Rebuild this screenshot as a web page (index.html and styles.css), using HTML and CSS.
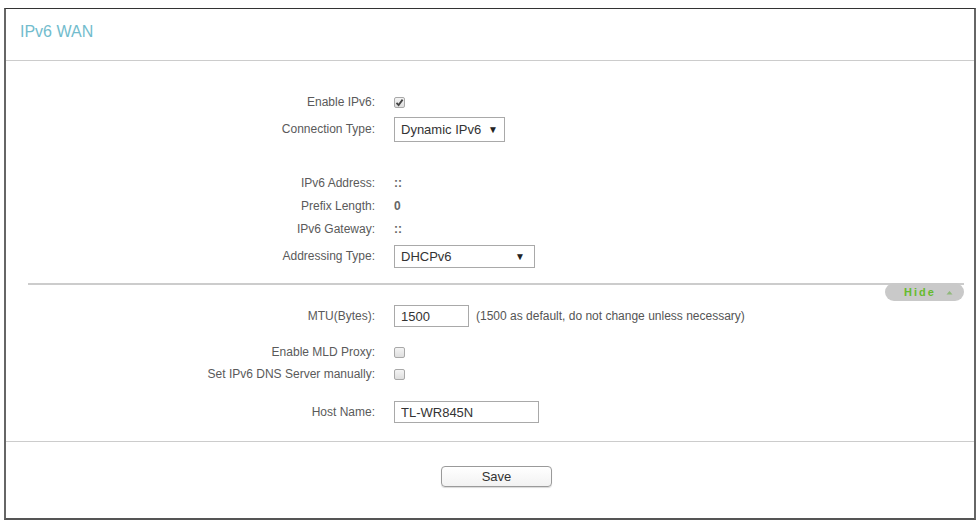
FILE: index.html
```html
<!DOCTYPE html>
<html lang="en">
<head>
  <meta charset="UTF-8">
  <meta name="viewport" content="width=device-width, initial-scale=1.0">
  <title>IPv6 WAN</title>
  <link rel="stylesheet" href="styles.css">
</head>
<body>

  <div class="panel">
    <div class="panel-head">IPv6 WAN</div>

    <form class="panel-body" id="wanForm">
      <div class="row row-enable">
        <label class="row-label">Enable IPv6:</label>
        <span class="row-value"><span class="check checked"><svg width="9" height="9" viewBox="0 0 9 9"><path d="M1.5 4.8 L3.6 7 L7.6 1.6" fill="none" stroke="#444" stroke-width="1.8"/></svg></span></span>
      </div>
      <div class="row row-conn">
        <label class="row-label">Connection Type:</label>
        <span class="row-value"><span class="select select-conn"><span>Dynamic IPv6</span><span class="arrow">&#9660;</span></span></span>
      </div>

      <div class="row row-addr">
        <label class="row-label">IPv6 Address:</label>
        <span class="row-value value-text">::</span>
      </div>
      <div class="row row-tight">
        <label class="row-label">Prefix Length:</label>
        <span class="row-value value-text">0</span>
      </div>
      <div class="row row-tight">
        <label class="row-label">IPv6 Gateway:</label>
        <span class="row-value value-text">::</span>
      </div>
      <div class="row row-type">
        <label class="row-label">Addressing Type:</label>
        <span class="row-value"><span class="select select-type"><span>DHCPv6</span><span class="arrow">&#9660;</span></span></span>
      </div>

      <div class="divider">
        <span class="toggle">Hide <svg width="7" height="5" viewBox="0 0 7 5"><path d="M0.5 4.5 L3.5 1 L6.5 4.5 Z" fill="#8fb87a"/></svg></span>
      </div>

      <div class="row row-mtu">
        <label class="row-label">MTU(Bytes):</label>
        <span class="row-value">
          <input type="text" class="field field-mtu" value="1500">
          <span class="hint">(1500 as default, do not change unless necessary)</span>
        </span>
      </div>

      <div class="row row-mld">
        <label class="row-label">Enable MLD Proxy:</label>
        <span class="row-value"><span class="check"></span></span>
      </div>
      <div class="row">
        <label class="row-label">Set IPv6 DNS Server manually:</label>
        <span class="row-value"><span class="check"></span></span>
      </div>

      <div class="row row-host">
        <label class="row-label">Host Name:</label>
        <span class="row-value"><input type="text" class="field field-host" value="TL-WR845N"></span>
      </div>
    </form>

    <div class="panel-foot">
      <button type="submit" form="wanForm" class="save-btn">Save</button>
    </div>
  </div>

</body>
</html>
```

FILE: styles.css
```css
body {
  font-family: "Liberation Sans", Arial, sans-serif;
  background-color: #fff;
  margin: 8px 3px 0 4px;
  color: #555;
}
.panel {
  border-top: 1px solid #333;
  border-left: 2px solid #666;
  border-right: 2px solid #666;
  border-bottom: 2px solid #555;
}
.panel-head {
  height: 52px;
  box-sizing: border-box;
  padding: 13px 0 0 14px;
  font-size: 16px;
  line-height: 20px;
  color: #72bccd;
  border-bottom: 1px solid #ccc;
}
.panel-body {
  margin: 0;
  padding: 30px 0 18px 0;
  border-bottom: 1px solid #ccc;
}
.row {
  display: flex;
  align-items: center;
  height: 22px;
  font-size: 12px;
}
.row-label {
  width: 369px;
  flex: none;
  text-align: right;
  color: #5a5a5a;
}
.row-value {
  margin-left: 19px;
  display: flex;
  align-items: center;
}
.value-text {
  font-weight: bold;
  color: #666;
}
.row-conn {
  height: 26px;
  margin-top: 3px;
}
.row-addr {
  margin-top: 30px;
}
.row-tight {
  margin-top: 1px;
}
.row-type {
  height: 24px;
  margin-top: 4px;
}
.row-mtu {
  margin-top: 4px;
}
.row-mld {
  margin-top: 14px;
}
.row-host {
  margin-top: 16px;
}
.check {
  width: 9px;
  height: 9px;
  border: 1px solid #a8a8a8;
  border-radius: 2px;
  background: linear-gradient(#f4f4f4, #dedede);
  display: flex;
  align-items: center;
  justify-content: center;
}
.select {
  display: flex;
  align-items: center;
  justify-content: space-between;
  box-sizing: border-box;
  border: 1px solid #a9a9a9;
  background-color: #fff;
  padding: 0 6px 0 6px;
  font-size: 13px;
  color: #333;
}
.select-conn {
  width: 111px;
  height: 25px;
}
.select-type {
  width: 141px;
  height: 23px;
  padding-right: 9px;
}
.arrow {
  font-size: 10px;
  color: #222;
}
.divider {
  margin: 15px 10px 0 22px;
  border-top: 2px solid #ccc;
  display: flex;
  justify-content: flex-end;
}
.toggle {
  margin-top: -2px;
  width: 79px;
  height: 18px;
  box-sizing: border-box;
  padding-left: 19px;
  border-radius: 9px;
  background-color: #c9c9c9;
  color: #66bb2e;
  font-size: 11px;
  font-weight: bold;
  letter-spacing: 2px;
  display: flex;
  align-items: center;
  gap: 10px;
}
.field {
  box-sizing: border-box;
  height: 22px;
  margin: 0;
  padding: 0 6px;
  border: 1px solid #a9a9a9;
  font-family: "Liberation Sans", Arial, sans-serif;
  font-size: 13px;
  color: #333;
}
.field-mtu {
  width: 75px;
}
.field-host {
  width: 145px;
}
.hint {
  margin-left: 7px;
  color: #555;
}
.panel-foot {
  height: 76px;
  box-sizing: border-box;
  padding: 24px 0 0 435px;
}
.save-btn {
  width: 111px;
  height: 21px;
  padding: 0;
  border: 1px solid #9a9a9a;
  border-radius: 4px;
  background: linear-gradient(#fff, #f2f2f2);
  box-shadow: 0 1px 1px rgba(0, 0, 0, 0.15);
  font-family: "Liberation Sans", Arial, sans-serif;
  font-size: 13px;
  color: #333;
  cursor: pointer;
}
```
